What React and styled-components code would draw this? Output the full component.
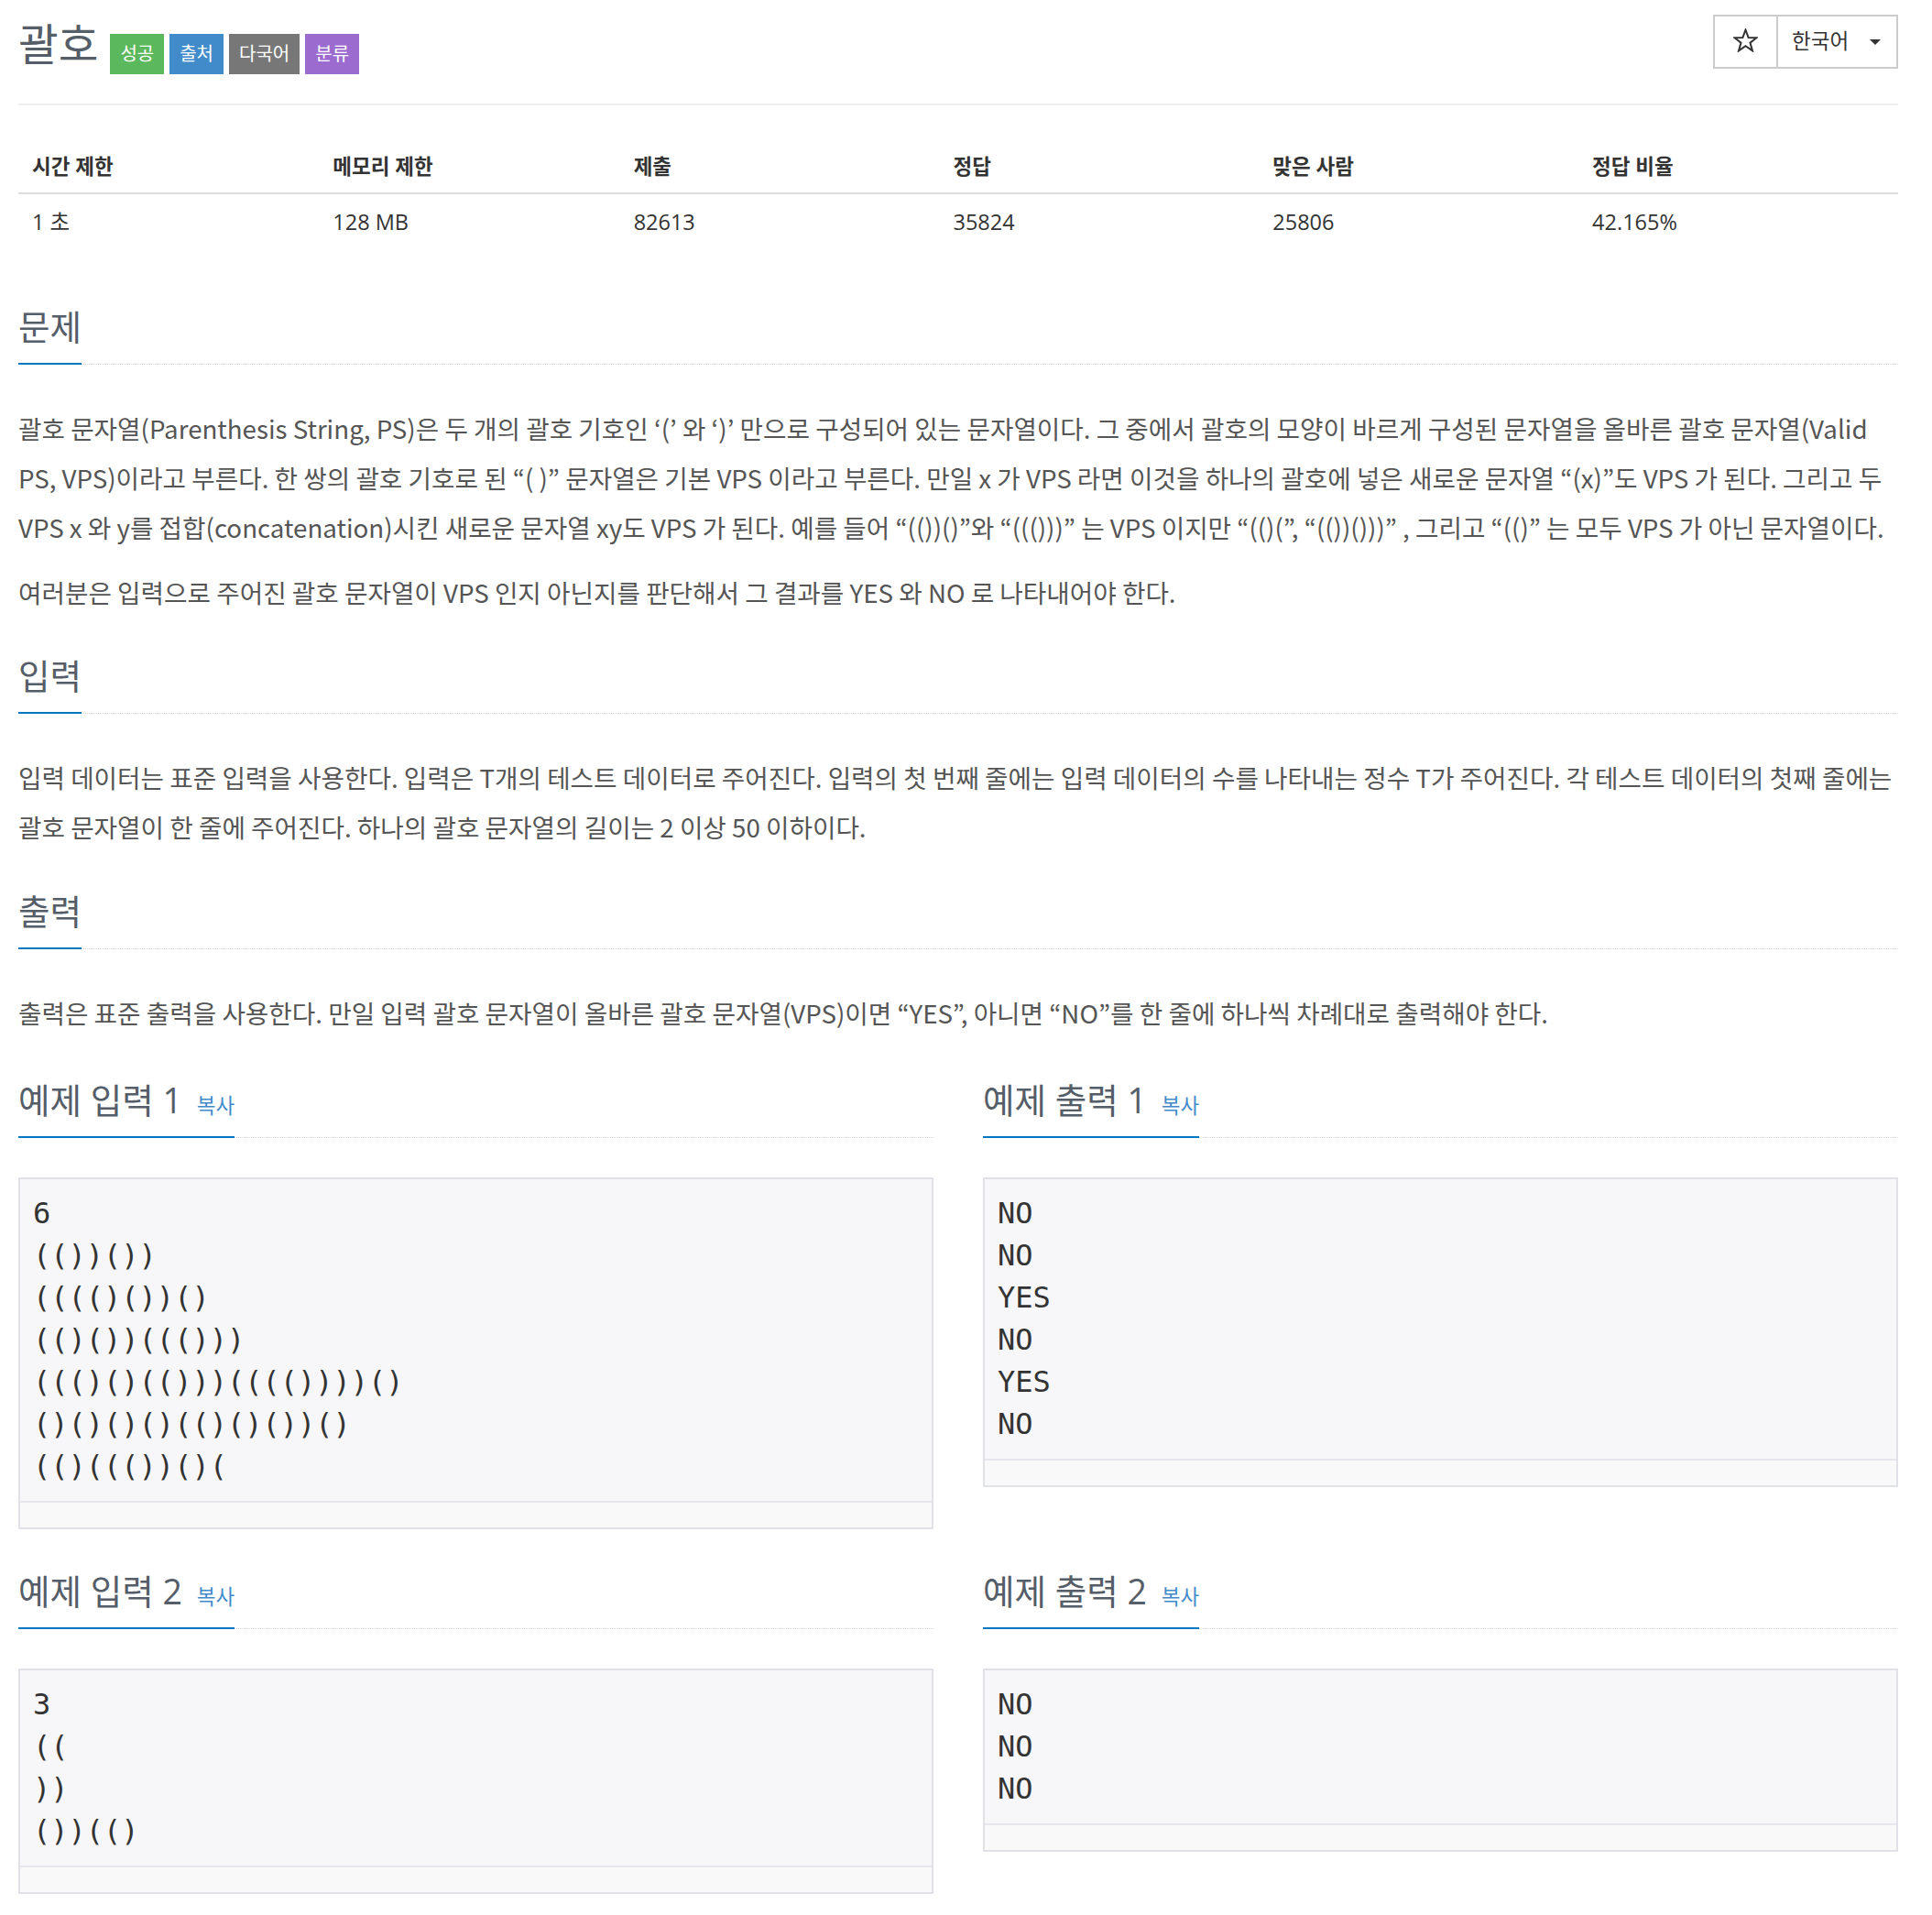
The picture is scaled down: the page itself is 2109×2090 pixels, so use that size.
import React from 'react';
import styled, { createGlobalStyle } from 'styled-components';

const GlobalStyle = createGlobalStyle`
  body {
    margin: 0;
    background: #fff;
    color: #333;
    font-family: "Open Sans", "Noto Sans CJK KR", sans-serif;
  }
`;

const stats = [
  { label: '시간 제한', value: '1 초', width: '16%' },
  { label: '메모리 제한', value: '128 MB', width: '16%' },
  { label: '제출', value: '82613', width: '17%' },
  { label: '정답', value: '35824', width: '17%' },
  { label: '맞은 사람', value: '25806', width: '17%' },
  { label: '정답 비율', value: '42.165%', width: '17%' },
];

const samples = [
  {
    n: 1,
    top: 46,
    input: ['6', '(())())', '(((()())()', '(()())((()))', '((()()(()))(((())))()', '()()()()(()()())()', '(()((())()('],
    output: ['NO', 'NO', 'YES', 'NO', 'YES', 'NO'],
  },
  {
    n: 2,
    top: 28,
    input: ['3', '((', '))', '())(()'],
    output: ['NO', 'NO', 'NO'],
  },
];

function StarIcon() {
  return (
    <svg width="27" height="26" viewBox="0 0 27 26">
      <polygon
        points="13.5,1.5 16.6,10 25.5,10.2 18.5,15.6 21,24.4 13.5,19.2 6,24.4 8.5,15.6 1.5,10.2 10.4,10"
        fill="none"
        stroke="#333"
        strokeWidth="2"
        strokeLinejoin="miter"
      />
    </svg>
  );
}

function App() {
  return (
    <>
      <GlobalStyle />
      <Page>
        <Header>
          <TitleGroup>
            <Title>괄호</Title>
            <Badge $bg="#5cb85c">성공</Badge>
            <Badge $bg="#428bca">출처</Badge>
            <Badge $bg="#777777">다국어</Badge>
            <Badge $bg="#9b6bcf">분류</Badge>
          </TitleGroup>
          <ButtonGroup>
            <StarButton><StarIcon /></StarButton>
            <LangButton>
              한국어
              <Caret />
            </LangButton>
          </ButtonGroup>
        </Header>

        <StatTable>
          <thead>
            <tr>
              {stats.map((s) => (
                <Th key={s.label} style={{ width: s.width }}>{s.label}</Th>
              ))}
            </tr>
          </thead>
          <tbody>
            <tr>
              {stats.map((s) => (
                <Td key={s.label}>{s.value}</Td>
              ))}
            </tr>
          </tbody>
        </StatTable>

        <Section>
          <Headline><H2>문제</H2></Headline>
          <Text>
            괄호 문자열(Parenthesis String, PS)은 두 개의 괄호 기호인 ‘(’ 와 ‘)’ 만으로 구성되어 있는 문자열이다. 그 중에서 괄호의 모양이 바르게 구성된 문자열을 올바른 괄호 문자열(Valid PS, VPS)이라고 부른다. 한 쌍의 괄호 기호로 된 “( )” 문자열은 기본 VPS 이라고 부른다. 만일 x 가 VPS 라면 이것을 하나의 괄호에 넣은 새로운 문자열 “(x)”도 VPS 가 된다. 그리고 두 VPS x 와 y를 접합(concatenation)시킨 새로운 문자열 xy도 VPS 가 된다. 예를 들어 “(())()”와 “((()))” 는 VPS 이지만 “(()(”, “(())()))” , 그리고 “(()” 는 모두 VPS 가 아닌 문자열이다.
          </Text>
          <Text>
            여러분은 입력으로 주어진 괄호 문자열이 VPS 인지 아닌지를 판단해서 그 결과를 YES 와 NO 로 나타내어야 한다.
          </Text>
        </Section>

        <Section>
          <Headline><H2>입력</H2></Headline>
          <Text>
            입력 데이터는 표준 입력을 사용한다. 입력은 T개의 테스트 데이터로 주어진다. 입력의 첫 번째 줄에는 입력 데이터의 수를 나타내는 정수 T가 주어진다. 각 테스트 데이터의 첫째 줄에는 괄호 문자열이 한 줄에 주어진다. 하나의 괄호 문자열의 길이는 2 이상 50 이하이다.
          </Text>
        </Section>

        <Section>
          <Headline><H2>출력</H2></Headline>
          <Text>
            출력은 표준 출력을 사용한다. 만일 입력 괄호 문자열이 올바른 괄호 문자열(VPS)이면 “YES”, 아니면 “NO”를 한 줄에 하나씩 차례대로 출력해야 한다.
          </Text>
        </Section>

        {samples.map((s) => (
          <SampleRow key={s.n} $top={s.top}>
            <div>
              <Headline><H2>예제 입력 {s.n} <Copy>복사</Copy></H2></Headline>
              <SampleBox>
                <Pre>{s.input.join('\n')}</Pre>
                <ScrollStrip />
              </SampleBox>
            </div>
            <div>
              <Headline><H2>예제 출력 {s.n} <Copy>복사</Copy></H2></Headline>
              <SampleBox>
                <Pre>{s.output.join('\n')}</Pre>
                <ScrollStrip />
              </SampleBox>
            </div>
          </SampleRow>
        ))}
      </Page>
    </>
  );
}

export default App;

const Page = styled.div`
  width: 2052px;
  margin-left: 20px;
  padding-bottom: 20px;
`;

const Header = styled.div`
  display: flex;
  justify-content: space-between;
  align-items: flex-start;
  height: 115px;
  box-sizing: border-box;
  border-bottom: 2px solid #eeeeee;
`;

const TitleGroup = styled.div`
  display: flex;
  align-items: baseline;
  gap: 6px;
  margin-top: 21px;
`;

const Title = styled.h1`
  margin: 0 7px 0 0;
  font-size: 47.5px;
  line-height: 54px;
  font-weight: 400;
  color: #555e68;
`;

const Badge = styled.span`
  display: inline-block;
  background: ${(p) => p.$bg};
  color: #fff;
  font-size: 20px;
  line-height: 44px;
  height: 44px;
  padding: 0 11px;
`;

const ButtonGroup = styled.div`
  display: flex;
  margin-top: 16px;
  height: 59px;
`;

const StarButton = styled.div`
  width: 71px;
  box-sizing: border-box;
  border: 2px solid #cccccc;
  display: flex;
  align-items: center;
  justify-content: center;
  padding-bottom: 4px;
`;

const LangButton = styled.div`
  width: 131px;
  box-sizing: border-box;
  border: 2px solid #cccccc;
  border-left: none;
  display: flex;
  align-items: center;
  justify-content: space-between;
  padding: 0 17px 4px 15px;
  font-size: 22.5px;
  color: #333;
`;

const Caret = styled.span`
  width: 0;
  height: 0;
  border-left: 6px solid transparent;
  border-right: 6px solid transparent;
  border-top: 6px solid #333;
  margin-top: 5px;
`;

const StatTable = styled.table`
  width: 100%;
  border-collapse: collapse;
  margin: 39px 0 65px;
  font-size: 23.5px;
  line-height: 33.6px;
  color: #333;
`;

const Th = styled.th`
  text-align: left;
  font-size: 22.5px;
  font-weight: 700;
  padding: 11px 15px;
  border-bottom: 2px solid #dddddd;
`;

const Td = styled.td`
  padding: 14px 15px 11px;
`;

const Section = styled.section`
  margin-top: 43px;
`;

const Headline = styled.div`
  border-bottom: 1px dotted #d3dae3;
  margin-bottom: 43px;
`;

const H2 = styled.h2`
  display: inline-block;
  margin: 0 0 -1px;
  padding-bottom: 17px;
  border-bottom: 2px solid #0076c0;
  font-size: 37.5px;
  line-height: 44px;
  font-weight: 400;
  color: #555e68;
`;

const Copy = styled.span`
  font-size: 22.5px;
  line-height: 1;
  color: #428bca;
  margin-left: 6px;
`;

const Text = styled.p`
  margin: 0 0 17px;
  font-family: "Noto Sans CJK KR", "Open Sans", sans-serif;
  font-size: 27.7px;
  line-height: 53.8px;
  color: #555;
  word-break: keep-all;
`;

const SampleRow = styled.div`
  display: grid;
  grid-template-columns: 1fr 1fr;
  column-gap: 54px;
  align-items: start;
  margin-top: ${(p) => p.$top}px;
`;

const SampleBox = styled.div`
  border: 2px solid #e1e1e8;
  background: #f7f7f9;
  margin-bottom: 18px;
`;

const Pre = styled.pre`
  margin: 0;
  padding: 14px 14px 15px;
  font-family: "DejaVu Sans Mono", monospace;
  font-size: 32px;
  line-height: 46px;
  color: #333;
`;

const ScrollStrip = styled.div`
  height: 27px;
  border-top: 2px solid #e6e6ec;
  background: #f9f9fa;
`;
